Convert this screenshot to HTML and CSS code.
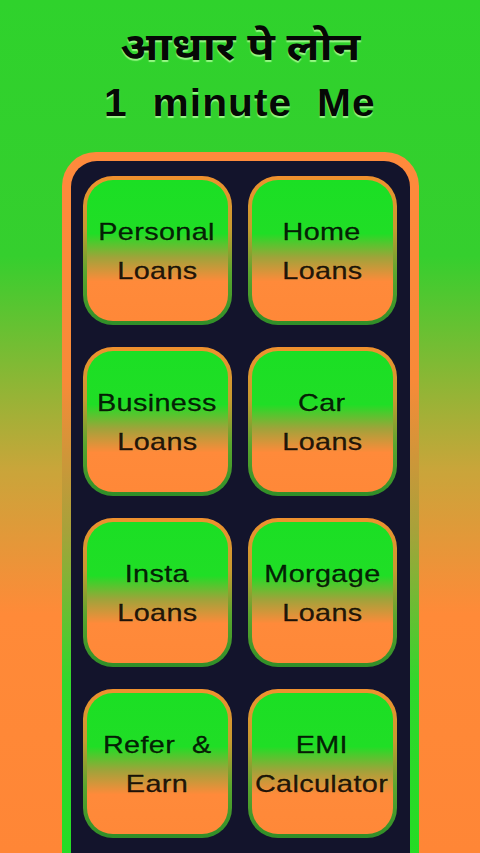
FILE: index.html
```html
<!DOCTYPE html>
<html lang="hi">
<head>
<meta charset="utf-8">
<title>आधार पे लोन</title>
<link rel="stylesheet" href="styles.css">
</head>
<body>
<div class="screen">
  <header class="title">
    <div class="title-line hindi">आधार पे लोन</div>
    <div class="title-line latin">1  minute  Me</div>
  </header>
  <main class="panel">
    <div class="panel-inner">
      <div class="tile"><div class="tile-face"><span>Personal</span><span>Loans</span></div></div>
      <div class="tile"><div class="tile-face"><span>Home</span><span>Loans</span></div></div>
      <div class="tile"><div class="tile-face"><span>Business</span><span>Loans</span></div></div>
      <div class="tile"><div class="tile-face"><span>Car</span><span>Loans</span></div></div>
      <div class="tile"><div class="tile-face"><span>Insta</span><span>Loans</span></div></div>
      <div class="tile"><div class="tile-face"><span>Morgage</span><span>Loans</span></div></div>
      <div class="tile"><div class="tile-face"><span>Refer  &amp;</span><span>Earn</span></div></div>
      <div class="tile"><div class="tile-face"><span>EMI</span><span>Calculator</span></div></div>
    </div>
  </main>
</div>
</body>
</html>
```

FILE: styles.css
```css
* { box-sizing: border-box; }
html, body {
  margin: 0;
  padding: 0;
  width: 480px;
  height: 853px;
  overflow: hidden;
}
body {
  font-family: "Liberation Sans", Arial, "Noto Sans", sans-serif;
}
.screen {
  width: 480px;
  height: 853px;
  overflow: hidden;
  background: linear-gradient(180deg, #2fd22c 0%, #35cf2e 30%, #c9a53a 55%, #ff8a38 72%, #ff8636 100%);
  display: flex;
  flex-direction: column;
  align-items: center;
}
.title {
  padding-top: 24px;
  text-align: center;
  color: #050805;
  display: flex;
  flex-direction: column;
  align-items: center;
}
.title-line {
  line-height: 53px;
  white-space: pre;
  text-shadow: 0 2px 1px rgba(170, 255, 150, 0.85);
}
.title-line.latin {
  font-size: 38px;
  font-weight: bold;
  letter-spacing: 1px;
  transform: scaleX(1.07);
}
.title-line.hindi {
  font-family: "Noto Sans Devanagari", "Noto Sans", "Lohit Devanagari", "Liberation Sans", sans-serif;
  font-size: 39px;
  font-weight: bold;
  transform: scaleX(1.15);
}
.panel {
  margin-top: 22px;
  width: 357px;
  flex: 0 0 auto;
  height: 760px;
  padding: 9px;
  border-radius: 34px;
  background: linear-gradient(180deg, #ff8a3c 0%, #f88a38 30%, #a6a23a 50%, #2fd82c 70%, #22dd22 100%);
}
.panel-inner {
  height: 100%;
  border-radius: 26px;
  background: #13142c;
  padding: 15px 12px;
  display: grid;
  grid-template-columns: 149px 149px;
  grid-auto-rows: 149px;
  column-gap: 16px;
  row-gap: 22px;
  align-content: start;
}
.tile {
  border-radius: 30px;
  padding: 4px;
  background: linear-gradient(180deg, #f0912e 0%, #c79a30 35%, #5aa62e 65%, #2f8e28 100%);
}
.tile-face {
  height: 100%;
  border-radius: 26px;
  background: linear-gradient(180deg, #1bdf24 0%, #20de26 38%, #a0a33a 55%, #ff8a3a 72%, #ff8838 100%);
  display: flex;
  flex-direction: column;
  align-items: center;
  justify-content: center;
}
.tile-face span {
  display: block;
  font-size: 24px;
  line-height: 39px;
  letter-spacing: 0.3px;
  white-space: pre;
  color: rgba(0, 0, 0, 0.85);
  transform: scaleX(1.2);
  -webkit-text-stroke: 0.3px rgba(0, 0, 0, 0.85);
}
```
